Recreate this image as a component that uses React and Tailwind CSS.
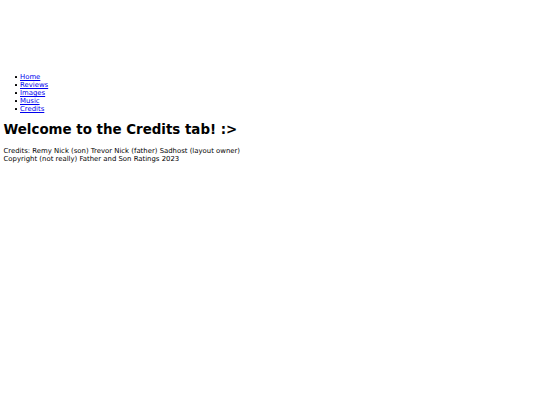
export default function App() {
  const links = ['Home', 'Reviews', 'Images', 'Music', 'Credits']

  return (
    <div className="min-h-[405px] bg-white text-black px-[3.5px] pt-[3.5px] text-[6.9px] leading-[normal] font-['DejaVu_Sans',sans-serif]">
      {/* empty header area */}
      <div className="h-[62.5px]" />

      <ul className="pl-[16.5px] mt-[7px]">
        {links.map(l => (
          <li key={l} className="flex items-center">
            <span className="w-[2px] h-[2px] bg-black rounded-[0.5px] -ml-[5.5px] mr-[3.5px] shrink-0" />
            <a href="#" className="text-[#0000ee] underline">{l}</a>
          </li>
        ))}
      </ul>

      <h1 className="text-[13.4px] leading-[normal] font-bold mt-[9.4px] mb-[9.4px]">Welcome to the Credits tab! :&gt;</h1>

      <p>
        Credits: Remy Nick (son) Trevor Nick (father) Sadhost (layout owner)
        <br />
        Copyright (not really) Father and Son Ratings 2023
      </p>
    </div>
  )
}
